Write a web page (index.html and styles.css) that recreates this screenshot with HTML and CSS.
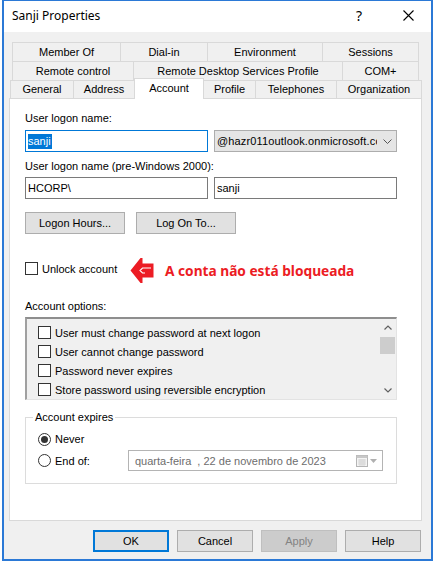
FILE: index.html
```html
<!DOCTYPE html>
<html>
<head>
<meta charset="utf-8">
<title>Sanji Properties</title>
<link rel="stylesheet" href="styles.css">
</head>
<body>
<div class="window">
  <div class="titlebar">
    <span class="title">Sanji Properties</span>
    <span class="tb-btn tb-help">?</span>
    <span class="tb-btn tb-close">
      <svg width="11" height="11" viewBox="0 0 11 11"><path d="M0.5 0.5 L10.5 10.5 M10.5 0.5 L0.5 10.5" stroke="#000" stroke-width="1.1" fill="none"/></svg>
    </span>
  </div>
  <div class="client">
    <div class="tabs">
      <div class="tabrow back">
        <div class="tab w-member">Member Of</div>
        <div class="tab w-dialin">Dial-in</div>
        <div class="tab w-env">Environment</div>
        <div class="tab w-sessions">Sessions</div>
      </div>
      <div class="tabrow back">
        <div class="tab w-remote">Remote control</div>
        <div class="tab w-rds">Remote Desktop Services Profile</div>
        <div class="tab w-com">COM+</div>
      </div>
      <div class="tabrow front">
        <div class="tab w-general">General</div>
        <div class="tab w-address">Address</div>
        <div class="tab w-account sel">Account</div>
        <div class="tab w-profile">Profile</div>
        <div class="tab w-tel">Telephones</div>
        <div class="tab w-org">Organization</div>
      </div>
    </div>
    <div class="panel">
      <div class="lbl">User logon name:</div>
      <div class="fieldrow r1">
        <div class="input focus"><span class="seltext">sanji</span></div>
        <div class="combo">
          <span class="combo-text">@hazr011outlook.onmicrosoft.com</span>
          <svg class="chev" width="9" height="5" viewBox="0 0 9 5"><path d="M0.5 0.5 L4.5 4.5 L8.5 0.5" stroke="#555" stroke-width="1" fill="none"/></svg>
        </div>
      </div>
      <div class="lbl l2">User logon name (pre-Windows 2000):</div>
      <div class="fieldrow r2">
        <div class="input">HCORP\</div>
        <div class="input">sanji</div>
      </div>
      <div class="btnrow">
        <div class="btn wide">Logon Hours...</div>
        <div class="btn wide">Log On To...</div>
      </div>
      <div class="unlock">
        <div class="unlock-label">
          <span class="cb white"></span>
          <span class="cb-text">Unlock account</span>
        </div>
        <svg class="arrow" width="24" height="27" viewBox="0 0 24 27">
          <path d="M0.5 13.5 L10.5 1 L12.5 1 L12.5 6.5 L23.5 6.5 L23.5 20.5 L12.5 20.5 L12.5 26 L10.5 26 Z" fill="#ec1c24"/>
          <path d="M21 11 L12.5 11 L10 13.5 L12.5 16 L15 16" stroke="#fff" stroke-width="1.1" fill="none"/>
        </svg>
        <span class="note">A conta não está bloqueada</span>
      </div>
      <div class="lbl l3">Account options:</div>
      <div class="list">
        <div class="items">
          <div class="item"><span class="cb"></span><span class="cb-text">User must change password at next logon</span></div>
          <div class="item"><span class="cb"></span><span class="cb-text">User cannot change password</span></div>
          <div class="item"><span class="cb"></span><span class="cb-text">Password never expires</span></div>
          <div class="item"><span class="cb"></span><span class="cb-text">Store password using reversible encryption</span></div>
        </div>
        <div class="vscroll">
          <div class="sb-btn"><svg width="8" height="5" viewBox="0 0 8 5"><path d="M0.5 4.5 L4 1 L7.5 4.5" stroke="#606060" stroke-width="1.2" fill="none"/></svg></div>
          <div class="sb-thumb"></div>
          <div class="sb-space"></div>
          <div class="sb-btn"><svg width="8" height="5" viewBox="0 0 8 5"><path d="M0.5 0.5 L4 4 L7.5 0.5" stroke="#606060" stroke-width="1.2" fill="none"/></svg></div>
        </div>
      </div>
      <fieldset class="group">
        <legend>Account expires</legend>
        <div class="radiorow first">
          <div class="radio-label"><span class="radio on"></span><span class="cb-text">Never</span></div>
        </div>
        <div class="radiorow">
          <div class="radio-label"><span class="radio"></span><span class="cb-text">End of:</span></div>
          <div class="date">
            <span class="date-text">quarta-feira  , 22 de novembro de 2023</span>
            <svg class="cal" width="12" height="12" viewBox="0 0 12 12">
              <rect x="0.5" y="0.5" width="11" height="11" fill="#f4f4f4" stroke="#b5b5b5"/>
              <rect x="0.5" y="0.5" width="11" height="2.5" fill="#c8c8c8"/>
              <path d="M2 5 H10 M2 7 H10 M2 9 H10 M4 4 V11 M6 4 V11 M8 4 V11" stroke="#cfcfcf" stroke-width="0.8"/>
            </svg>
            <svg class="dd" width="7" height="4" viewBox="0 0 7 4"><path d="M0 0 L7 0 L3.5 4 Z" fill="#b0b0b0"/></svg>
          </div>
        </div>
      </fieldset>
    </div>
    <div class="dlg-buttons">
      <div class="btn dlg default">OK</div>
      <div class="btn dlg">Cancel</div>
      <div class="btn dlg disabled">Apply</div>
      <div class="btn dlg">Help</div>
    </div>
  </div>
</div>
</body>
</html>
```
FILE: styles.css
```css
* { box-sizing: border-box; }
html, body { margin: 0; padding: 0; }
body {
  width: 434px;
  height: 562px;
  background: #ffffff;
  font-family: "Liberation Sans", Arial, sans-serif;
  font-size: 11px;
  color: #000;
  overflow: hidden;
}
.window {
  margin-left: 2px;
  width: 431px;
  height: 561px;
  border-style: solid;
  border-color: #2b79d6;
  border-width: 1px 2px 2px 2px;
  background: #f0f0f0;
  display: flex;
  flex-direction: column;
}
.titlebar {
  height: 31px;
  background: #fff;
  display: flex;
  align-items: center;
  flex-shrink: 0;
}
.title {
  flex: 1;
  padding-left: 8px;
  font-family: "Noto Sans", "Open Sans", sans-serif;
  font-size: 12px;
  padding-bottom: 2px;
}
.tb-btn {
  width: 46px;
  height: 30px;
  display: flex;
  align-items: center;
  justify-content: center;
}
.tb-help {
  font-family: "Noto Sans", sans-serif;
  font-size: 14px;
  margin-right: 3px;
  padding-bottom: 2px;
}
.tb-close { margin-right: 0; padding-bottom: 2px; }
.client {
  flex: 1;
  padding-top: 10px;
  display: flex;
  flex-direction: column;
}
.tabs { display: flex; flex-direction: column; }
.tabrow { display: flex; height: 19px; }
.tabrow.back { margin-left: 8px; }
.tabrow.front { margin-left: 6px; height: 18px; align-items: flex-start; }
.tab {
  height: 19px;
  border: 1px solid #d9d9d9;
  border-bottom: none;
  margin-right: -1px;
  text-align: center;
  line-height: 18px;
  white-space: nowrap;
  background: #f0f0f0;
}
.tabrow.front .tab { height: 18px; line-height: 17px; }
.tabrow.front .tab.sel {
  height: 21px;
  margin-top: -2px;
  background: #fff;
  position: relative;
  z-index: 2;
  line-height: 18px;
}
.w-member { width: 109px; }
.w-dialin { width: 88px; }
.w-env { width: 116px; }
.w-sessions { width: 97px; }
.w-remote { width: 122px; }
.w-rds { width: 210px; }
.w-com { width: 77px; }
.w-general { width: 64px; }
.w-address { width: 62px; }
.w-account { width: 70px; }
.w-profile { width: 53px; }
.w-tel { width: 82px; }
.w-org { width: 86px; }

.panel {
  margin-left: 5px;
  width: 413px;
  height: 423px;
  border: 1px solid #d9d9d9;
  background: #fff;
  padding: 13px 24px 0 15px;
  flex-shrink: 0;
}
.lbl { height: 13px; line-height: 13px; white-space: nowrap; }
.l2 { margin-top: 8px; }
.l3 { margin-top: 17px; }
.fieldrow { display: flex; gap: 6px; }
.r1 { margin-top: 5px; }
.r2 { margin-top: 4px; }
.input {
  width: 183px;
  height: 22px;
  border: 1px solid #7a7a7a;
  background: #fff;
  padding: 0 2px;
  display: flex;
  align-items: center;
  white-space: nowrap;
}
.input.focus { border-color: #0078d7; }
.seltext {
  background: #0078d7;
  color: #fff;
  line-height: 15px;
  padding: 0 1px 0 0;
}
.combo {
  width: 183px;
  height: 22px;
  border: 1px solid #adadad;
  background: #e5e5e5;
  display: flex;
  align-items: center;
  padding-left: 2px;
  overflow: hidden;
  white-space: nowrap;
}
.combo-text { width: 160px; overflow: hidden; flex-shrink: 0; letter-spacing: 0.15px; }
.chev { margin-left: 6px; flex-shrink: 0; }
.btnrow { margin-top: 13px; display: flex; gap: 11px; }
.btn {
  height: 22px;
  background: #e1e1e1;
  border: 1px solid #adadad;
  display: flex;
  align-items: center;
  justify-content: center;
  white-space: nowrap;
}
.btn.wide { width: 100px; }
.unlock {
  margin-top: 23px;
  height: 26px;
  display: flex;
  align-items: center;
}
.unlock-label {
  width: 105px;
  display: flex;
  align-items: center;
  margin-bottom: 3px;
}
.cb {
  width: 13px;
  height: 13px;
  border: 1px solid #333;
  background: #fff;
  flex-shrink: 0;
}
.cb-text { margin-left: 4px; white-space: nowrap; }
.arrow { flex-shrink: 0; }
.note {
  margin-left: 11px;
  color: #ec1c24;
  font-family: "Noto Sans", "Open Sans", sans-serif;
  font-weight: bold;
  font-size: 13.7px;
  white-space: nowrap;
}
.list {
  margin-top: 4px;
  width: 372px;
  height: 83px;
  display: flex;
  border-style: solid;
  border-width: 2px 1px 1px 2px;
  border-color: #8e8e8e #e3e3e3 #e3e3e3 #a0a0a0;
  background: #f0f0f0;
  overflow: hidden;
}
.items { flex: 1; padding: 4px 0 0 11px; }
.item { height: 19px; display: flex; align-items: center; }
.vscroll { width: 17px; display: flex; flex-direction: column; }
.sb-btn { height: 17px; display: flex; align-items: center; justify-content: center; }
.sb-thumb { height: 17px; margin: 1px 1px 0 1px; background: #cdcdcd; }
.sb-space { flex: 1; }
.group {
  margin: 11px 0 0 0;
  padding: 0;
  width: 372px;
  height: 73px;
  border: 1px solid #dcdcdc;
  min-width: 0;
}
.group legend {
  padding: 0 2px;
  margin-left: 7px;
  line-height: 13px;
}
.radiorow { display: flex; align-items: center; padding-left: 12px; }
.radiorow.first { margin-top: 6px; height: 18px; margin-bottom: 2px; }
.radiorow + .radiorow { height: 21px; }
.radio-label { width: 90px; display: flex; align-items: center; }
.radio {
  width: 13px;
  height: 13px;
  border: 1px solid #333;
  border-radius: 50%;
  background: #fff;
  flex-shrink: 0;
  display: flex;
  align-items: center;
  justify-content: center;
}
.radio.on::after {
  content: "";
  width: 7px;
  height: 7px;
  border-radius: 50%;
  background: #333;
}
.date {
  width: 255px;
  height: 21px;
  border: 1px solid #b4b4b4;
  background: #fff;
  display: flex;
  align-items: center;
  padding-left: 6px;
  color: #6d6d6d;
}
.date-text { white-space: pre; width: 221px; flex-shrink: 0; }
.cal { flex-shrink: 0; }
.dd { margin-left: 2px; flex-shrink: 0; }
.dlg-buttons {
  margin-top: 9px;
  display: flex;
  justify-content: flex-end;
  gap: 8px;
  padding-right: 10px;
}
.btn.dlg { width: 76px; }
.btn.default { border: 2px solid #0078d7; }
.btn.disabled { background: #cccccc; border-color: #bfbfbf; color: #838383; }
```
